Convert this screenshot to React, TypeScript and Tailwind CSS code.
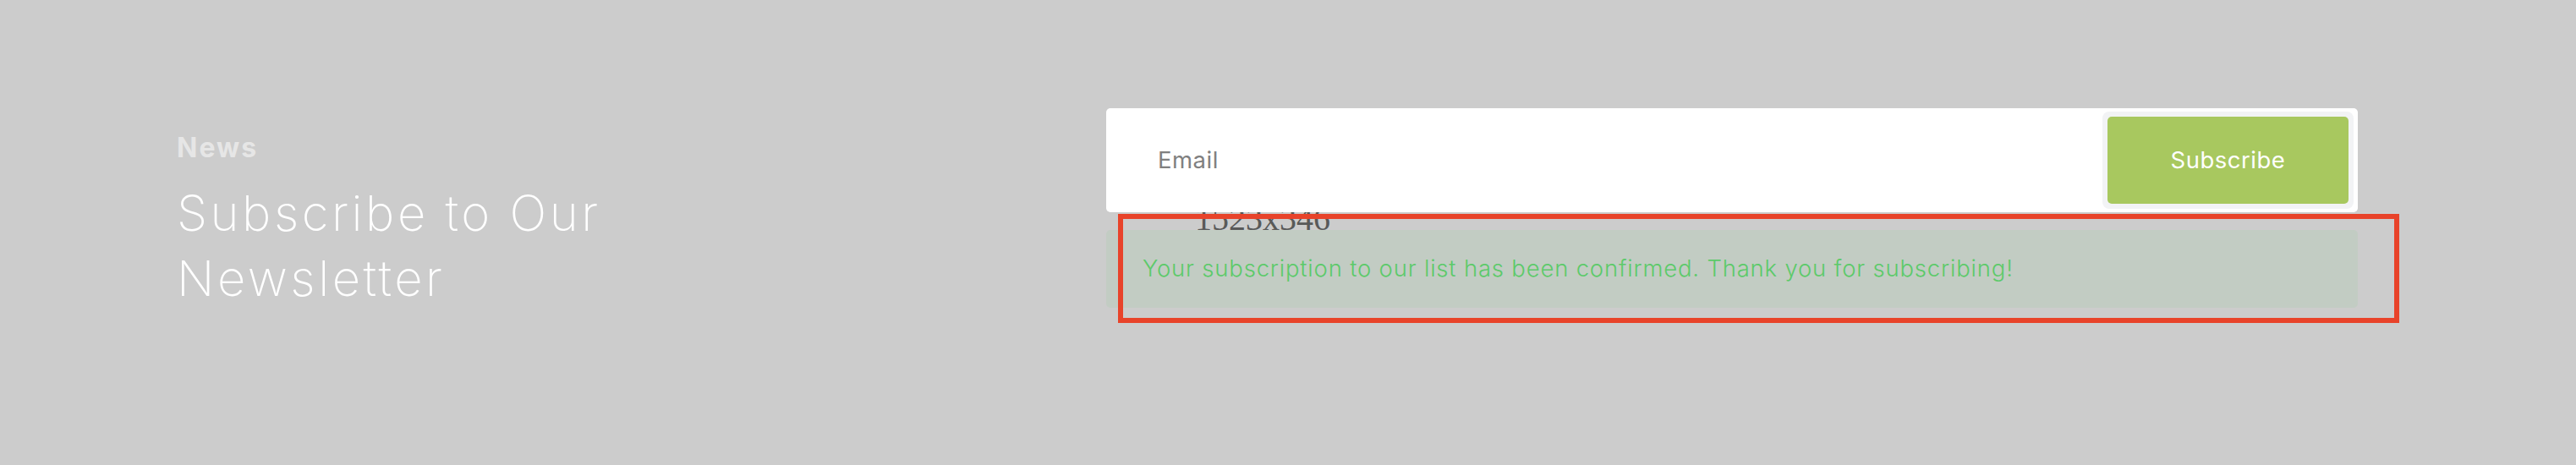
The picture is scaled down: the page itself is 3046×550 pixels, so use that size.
import { useState } from 'react'

export default function App() {
  const [email, setEmail] = useState('')

  return (
    <main className="flex h-[550px] w-full items-start bg-[#cccccc] pl-[209px] pr-[258px] font-['Inter',sans-serif]">
      <div className="flex-1 pt-[159px]">
        <p className="text-[32px] leading-none font-bold tracking-[2px] text-[#e6e6e6]">News</p>
        <h2 className="mt-[23px] text-[58px] leading-[77px] font-extralight tracking-[3.5px] text-white">
          Subscribe to Our
          <br />
          Newsletter
        </h2>
      </div>

      <div className="relative w-[1480px] pt-[128px]">
        <span className="absolute top-[239px] left-[105px] z-0 font-['Liberation_Serif',serif] text-[40px] leading-none text-[#595959]">
          1523x346
        </span>

        <form
          className="relative z-10 flex h-[123px] items-stretch rounded-[5px] bg-white"
          onSubmit={(event) => event.preventDefault()}
        >
          <input
            className="flex-1 bg-transparent pl-[61px] text-[27.5px] tracking-[0.5px] text-[#555] outline-none placeholder:text-[#808080]"
            value={email}
            onChange={(event) => setEmail(event.target.value)}
            placeholder="Email"
          />
          <div className="my-[4px] mr-[5px] rounded-[8px] bg-[#f2f3f5] p-[6px]">
            <button className="h-full w-[285px] rounded-[5px] bg-[#a8c85f] text-[27.5px] tracking-[0.5px] text-white">
              Subscribe
            </button>
          </div>
        </form>

        <div className="relative z-10 mt-[21px] flex h-[92px] items-center rounded-[5px] bg-[#c2ccc3] pl-[43px]">
          <p className="text-[27.5px] font-light tracking-[0.8px] text-[#5cca6a]">
            Your subscription to our list has been confirmed. Thank you for subscribing!
          </p>
        </div>

        <div className="pointer-events-none absolute top-[253px] left-[14px] z-20 h-[129px] w-[1515px] border-[6px] border-[#e8432a]" />
      </div>
    </main>
  )
}
